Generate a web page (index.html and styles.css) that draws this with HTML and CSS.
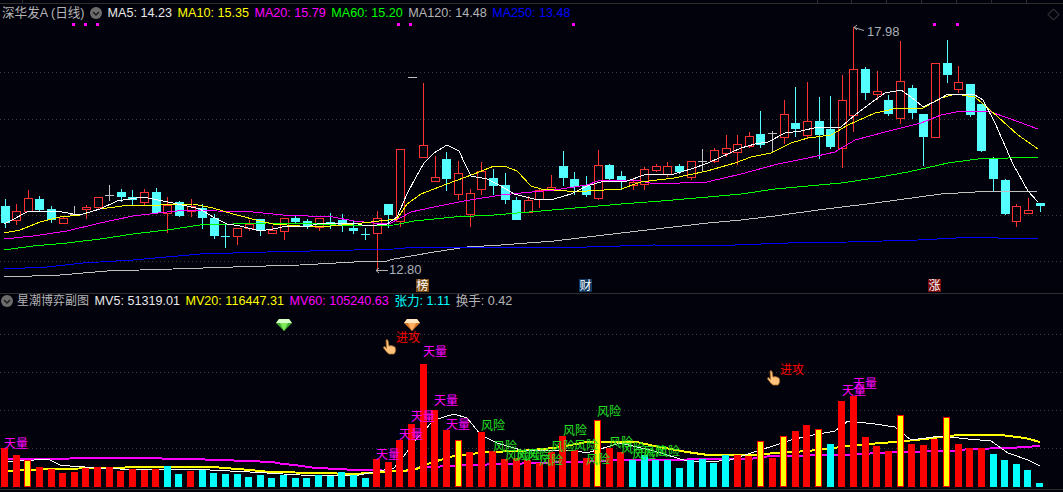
FILE: index.html
```html
<!DOCTYPE html>
<html lang="en">
<head>
    <meta charset="UTF-8">
    <title>深华发A (日线)</title>
    <link rel="stylesheet" href="styles.css">
</head>
<body>

    <svg id="ruler" class="ruler" width="1063" height="4"></svg>

    <div class="legend">
        <span class="title">深华发A (日线)</span>
        <svg class="toggle" width="12" height="12" viewBox="0 0 12 12"><circle cx="6" cy="6" r="6"/><path d="M3 5l3 3 3-3"/></svg>
        <span class="c-white">MA5: 14.23</span>
        <span class="c-yellow">MA10: 15.35</span>
        <span class="c-magenta">MA20: 15.79</span>
        <span class="c-green">MA60: 15.20</span>
        <span class="c-grey">MA120: 14.48</span>
        <span class="c-blue">MA250: 13.48</span>
        <svg class="layout-icon" width="13" height="13" viewBox="0 0 13 13"><path d="M6.5 1L12 6.5 6.5 12 1 6.5z"/></svg>
    </div>
    <svg id="kline" class="chart" width="1063" height="272" viewBox="0 21 1063 272"></svg>

    <div class="legend legend-sub">
        <svg class="toggle" width="12" height="12" viewBox="0 0 12 12"><circle cx="6" cy="6" r="6"/><path d="M3 5l3 3 3-3"/></svg>
        <span class="title">星潮博弈副图</span>
        <span class="c-white">MV5: 51319.01</span>
        <span class="c-yellow">MV20: 116447.31</span>
        <span class="c-magenta">MV60: 105240.63</span>
        <span class="c-cyan">张力: 1.11</span>
        <span class="c-grey">换手: 0.42</span>
    </div>
    <svg id="volume" class="chart" width="1063" height="181" viewBox="0 311 1063 181">
        <defs>
            <symbol id="gem-green" viewBox="0 0 16 12">
                <path fill="#3fae2c" d="M3 0h10l3 4-8 8-8-8z"/>
                <path fill="#d8ffc8" d="M3 0h10l3 4H0z"/>
                <path fill="#7fe85a" d="M4 4h8l-4 8z"/>
            </symbol>
            <symbol id="gem-orange" viewBox="0 0 16 12">
                <path fill="#d9772a" d="M3 0h10l3 4-8 8-8-8z"/>
                <path fill="#ffe6c0" d="M3 0h10l3 4H0z"/>
                <path fill="#ffb062" d="M4 4h8l-4 8z"/>
            </symbol>
            <symbol id="hand" viewBox="0 0 14 16">
                <path fill="#ffc27a" stroke="#9a6426" stroke-width=".8" d="M3 1.200C3.800.2 5 .8 5.100 2L6 7l2-.4 2 .5 2 1c1 2 1 5-1 7H6C4 14 2.300 11 .7 9.200 0 8 1.200 7 2.200 8l1.300 1.300z"/>
            </symbol>
        </defs>
    </svg>

    <script src="script.js"></script>
</body>
</html>
```

FILE: styles.css
```css
html, body {
    margin: 0;
    background: #02020c;
}
body {
    width: 1063px;
    height: 492px;
    overflow: hidden;
    font-family: "Liberation Sans", "Noto Sans CJK SC", sans-serif;
    font-size: 12.6px;
    line-height: 14px;
}
svg {
    display: block;
}
.legend {
    display: flex;
    align-items: center;
    gap: 5.5px;
    height: 17px;
    padding-left: 2px;
    white-space: nowrap;
}
.legend-sub {
    height: 14px;
    padding-bottom: 3px;
    padding-left: 1px;
    border-top: 1px solid #2e2e2e;
}
.legend .title {
    color: #b4b4b4;
}
.legend-sub .title {
    font-size: 12px;
    margin-left: -1.5px;
}
.toggle circle {
    fill: #6c6c6c;
}
.toggle path {
    fill: none;
    stroke: #1c1c1c;
    stroke-width: 1.5;
}
.layout-icon {
    position: absolute;
    left: 1047px;
    top: 8px;
}
.layout-icon path {
    fill: none;
    stroke: #4a4a4a;
}
.c-white { color: #e8e8e8; }
.c-yellow { color: #ffff00; }
.c-magenta { color: #ff00ff; }
.c-green { color: #00ff00; }
.c-grey { color: #b4b4b4; }
.c-blue { color: #0000ff; }
.c-cyan { color: #00ffff; }

.ruler line, .base {
    stroke: #2e2e2e;
}
.chart text {
    font-family: "Noto Sans CJK SC", "Liberation Sans", sans-serif;
    font-size: 12px;
}
.grid {
    stroke: #3c3c3c;
    stroke-dasharray: 1 3;
}
.ma {
    fill: none;
    shape-rendering: crispEdges;
}
.mv {
    fill: none;
    stroke-width: 2;
    shape-rendering: crispEdges;
}
.s-white { stroke: #ffffff; }
.s-yellow { stroke: #ffff00; }
.s-magenta { stroke: #ff00ff; }
.s-green { stroke: #00ff00; }
.s-grey { stroke: #c0c0c0; }
.s-blue { stroke: #0000ff; }

.wick, .doji { shape-rendering: crispEdges; }
.up { stroke: #ff3232; }
.down { stroke: #54ffff; }
.flat { stroke: #c0c0c0; }
.body-up { fill: none; stroke: #ff3232; shape-rendering: crispEdges; }
.body-down { fill: #54ffff; shape-rendering: crispEdges; }
.mark { fill: #ff00ff; }

.bar-r { fill: #ff0000; }
.bar-c { fill: #00ffff; }
.bar-y { fill: #ffff00; stroke: #ff0000; shape-rendering: crispEdges; }

.chart .price {
    fill: #a8b0b8;
    font-family: "Liberation Sans", sans-serif;
    font-size: 13px;
}
.pointer { stroke: #b0b0b0; fill: none; }
.badge-text { fill: #ffffff; text-anchor: middle; }
.tag-star { fill: #ff00ff; }
.tag-risk { fill: #22e022; }
.tag-attack { fill: #ff0000; }
```

FILE: script.js
```js
// candles: [bodyTop, bodyBottom, high, low, kind]  r = hollow red, c = cyan, g = grey doji, d = cyan doji
var candles = [
    [206,223,199,228,'c'],[211,220,204,225,'r'],[198,211,190,212,'r'],[199,210,196,211,'c'],[209,220,206,223,'c'],
    [218,223,216,223,'r'],[214,214,206,216,'g'],[207,209,205,219,'r'],[197,207,197,209,'r'],[195,195,185,201,'g'],
    [192,197,189,202,'c'],[197,200,190,205,'c'],[192,202,189,205,'r'],[192,213,188,214,'c'],[205,213,197,233,'r'],
    [202,216,201,217,'c'],[206,211,199,217,'r'],[208,218,204,229,'c'],[218,236,214,239,'c'],[236,236,224,248,'d'],
    [228,236,228,245,'r'],[224,228,220,231,'r'],[219,231,219,236,'c'],[230,233,226,234,'r'],[218,231,218,240,'r'],
    [218,222,216,224,'c'],[221,227,219,229,'c'],[218,227,218,231,'r'],[222,222,213,229,'d'],[220,226,214,232,'c'],
    [228,231,221,234,'c'],[234,234,228,240,'d'],[218,233,211,270,'r'],[204,215,204,228,'c'],[149,221,149,227,'r'],
    [77,77,77,77,'g'],[145,157,83,157,'r'],[177,181,156,181,'r'],[159,179,152,191,'c'],[173,194,161,200,'r'],
    [193,214,189,227,'r'],[171,189,162,195,'r'],[178,186,169,195,'c'],[185,200,173,204,'c'],[200,220,197,220,'c'],
    [200,212,196,213,'r'],[190,199,188,208,'r'],[187,189,175,191,'r'],[166,178,151,186,'c'],[179,187,172,195,'c'],
    [186,195,176,197,'c'],[165,198,150,200,'r'],[165,179,164,181,'c'],[176,181,171,190,'c'],[182,185,178,190,'r'],
    [169,184,167,190,'r'],[166,170,164,172,'r'],[166,174,162,177,'r'],[166,172,164,174,'c'],[161,177,161,180,'r'],
    [161,161,149,172,'g'],[150,161,148,163,'r'],[148,153,135,157,'r'],[144,152,135,165,'r'],[136,146,132,148,'r'],
    [134,145,111,148,'c'],[133,133,131,152,'g'],[114,137,100,144,'r'],[123,129,87,137,'c'],[121,135,82,138,'r'],
    [121,135,97,159,'c'],[129,147,96,149,'c'],[100,148,75,168,'r'],[69,115,27,132,'r'],[69,93,67,100,'c'],
    [91,94,71,100,'r'],[100,114,95,116,'c'],[81,118,41,124,'r'],[88,113,85,119,'c'],[114,137,114,166,'c'],
    [63,137,63,137,'r'],[63,75,40,83,'c'],[82,89,66,93,'r'],[84,115,84,117,'c'],[104,151,104,152,'c'],
    [158,179,157,191,'c'],[180,214,179,215,'c'],[206,221,204,227,'r'],[210,213,198,214,'r'],[203,206,203,212,'c']
];

var maLines = {
    white: [4,224,10,221,27,212,40,211,57,211,73,214,83,214,100,209,117,201,143,197,163,201,187,206,200,209,213,217,227,224,240,226,260,231,273,229,287,226,310,226,320,223,353,223,367,226,387,224,397,217,407,194,416,177,424,163,434,153,447,145,459,151,465,164,471,176,487,179,501,186,514,194,534,199,554,199,571,194,587,186,604,181,627,181,644,175,674,174,691,169,708,163,721,157,741,148,755,144,768,142,785,133,801,131,818,127,841,127,855,115,868,105,885,93,901,90,915,100,923,107,938,100,948,94,975,95,983,100,995,123,1013,164,1028,191,1038,202],
    yellow: [4,233,20,230,40,222,60,217,80,215,100,209,130,205,160,205,193,204,213,208,233,214,260,221,273,224,300,226,320,227,353,224,397,219,407,204,421,194,447,184,474,174,494,166,504,166,517,171,531,186,541,189,567,191,587,191,621,189,641,182,674,178,707,171,735,163,751,157,771,153,791,143,808,138,831,135,848,125,875,113,898,108,923,108,941,98,955,94,975,97,998,117,1018,135,1038,149],
    magenta: [4,239,33,236,67,231,100,223,133,216,167,212,187,210,217,211,253,212,283,215,333,217,354,221,374,223,391,223,411,212,434,207,464,201,501,195,521,193,554,190,587,185,601,180,637,180,654,184,707,182,741,174,778,164,808,158,835,152,855,140,885,132,921,123,941,115,961,111,988,111,1008,118,1038,129],
    green: [4,250,33,246,67,243,100,239,133,234,167,230,200,225,233,224,267,223,317,224,354,226,394,225,414,221,454,217,494,215,541,211,587,207,621,204,661,201,708,197,741,194,775,189,808,186,841,183,875,178,908,172,948,163,978,159,1038,157],
    grey: [4,277,60,275,107,271,173,269,233,267,300,265,354,262,387,261,394,259,434,252,467,247,501,245,554,241,621,233,708,223,741,220,775,216,818,210,875,203,941,194,975,192,1038,191],
    blue: [4,269,47,267,83,263,133,260,200,254,267,252,354,250,394,249,417,247,487,247,587,247,654,245,708,246,788,243,848,242,918,240,975,237,998,238,1038,238]
};

// volume bars: [top, kind]  r = red, c = cyan, y = yellow
var bars = [
    [448,'r'],[455,'r'],[460,'y'],[467,'r'],[469,'r'],[473,'r'],[472,'r'],[468,'r'],[467,'r'],[467,'r'],
    [471,'r'],[469,'r'],[470,'r'],[469,'r'],[466,'c'],[474,'c'],[471,'r'],[470,'c'],[473,'c'],[474,'c'],
    [474,'c'],[477,'c'],[475,'c'],[478,'c'],[475,'c'],[478,'c'],[478,'c'],[475,'c'],[476,'c'],[472,'c'],
    [475,'c'],[478,'c'],[459,'r'],[462,'r'],[440,'r'],[424,'r'],[364,'r'],[410,'r'],[430,'r'],[440,'y'],
    [452,'r'],[432,'r'],[451,'r'],[459,'r'],[458,'r'],[460,'r'],[463,'r'],[452,'r'],[436,'r'],[450,'r'],
    [458,'r'],[420,'y'],[448,'r'],[452,'r'],[460,'c'],[455,'c'],[460,'c'],[460,'c'],[468,'c'],[460,'c'],
    [459,'c'],[463,'c'],[455,'c'],[455,'r'],[456,'r'],[441,'y'],[458,'r'],[436,'y'],[431,'r'],[425,'r'],
    [429,'y'],[444,'c'],[401,'r'],[396,'r'],[437,'r'],[446,'r'],[451,'r'],[415,'y'],[444,'r'],[445,'r'],
    [439,'r'],[417,'y'],[444,'r'],[448,'r'],[448,'r'],[454,'c'],[460,'c'],[464,'c'],[470,'c'],[483,'c']
];

var mvLines = {
    magenta: [8,459,133,458,190,459,248,461,272,462,283,464,295,465,315,468,340,469,354,470,410,471,417,468,430,467,470,465,540,463,600,461,625,460,750,459,770,456,840,455,900,452,950,451,970,449,1010,448,1040,446],
    yellow: [8,471,50,469,108,468,143,467,213,467,225,468,250,470,270,472,320,473,354,474,414,470,430,463,454,456,487,452,520,451,554,448,587,442,637,442,654,446,687,452,708,455,755,455,775,453,808,451,841,447,868,444,895,442,925,439,958,435,1001,435,1025,438,1040,442]
};
var mvWhite = [8,462,20,461,48,459,52,461,60,465,70,466,100,468,120,469,170,469,210,470,250,472,300,475,354,476,394,468,404,456,417,438,434,420,454,414,467,418,481,435,497,443,521,450,571,450,587,453,620,443,654,451,687,461,708,462,730,460,791,440,808,436,835,431,848,421,875,424,895,427,911,440,941,436,968,439,991,441,1008,453,1028,460,1040,466];

var tags = [
    ['天量','star',[[4,444],[376,455],[399,435],[411,417],[423,352],[434,401],[446,425],[842,391],[853,384]]],
    ['风险','risk',[[481,426],[493,447],[505,456],[516,456],[527,455],[539,461],[551,447],[563,431],[574,446],[586,460],[597,412],[609,443],[621,449],[632,455],[643,452],[656,452]]],
    ['进攻','attack',[[396,338],[780,370]]]
];

var NS = 'http://www.w3.org/2000/svg';

function add(parent, name, attrs, text) {
    var el = document.createElementNS(NS, name);
    for (var k in attrs) el.setAttribute(k, attrs[k]);
    if (text) el.textContent = text;
    parent.appendChild(el);
    return el;
}

function grid(svg, ys) {
    ys.forEach(function (y) {
        add(svg, 'line', { 'class': 'grid', x1: 0, x2: 1063, y1: y + 0.5, y2: y + 0.5 });
    });
}

function poly(svg, cls, pts) {
    add(svg, 'polyline', { 'class': cls, points: pts.join(' ') });
}

// top ruler
var ruler = document.getElementById('ruler');
add(ruler, 'line', { x1: 0, x2: 1063, y1: 3.5, y2: 3.5 });
[22, 817, 851, 886, 921, 956, 991, 1026].forEach(function (x) {
    add(ruler, 'line', { x1: x + 0.5, x2: x + 0.5, y1: 0, y2: 3 });
});

// price chart
var kline = document.getElementById('kline');
grid(kline, [72, 119, 166, 215, 261]);

[73, 85, 97, 398, 410, 573, 934, 957].forEach(function (x) {
    add(kline, 'rect', { 'class': 'mark', x: x - 1, y: 23, width: 3, height: 3 });
});

candles.forEach(function (c, i) {
    var cx = Math.round(4.5 + 11.63 * i), top = c[0], bot = c[1], hi = c[2], lo = c[3], kind = c[4];
    var x = cx + 0.5;
    if (kind === 'r') {
        if (hi < top) add(kline, 'line', { 'class': 'wick up', x1: x, x2: x, y1: hi, y2: top });
        if (lo > bot) add(kline, 'line', { 'class': 'wick up', x1: x, x2: x, y1: bot, y2: lo });
        add(kline, 'rect', { 'class': 'body-up', x: cx - 3.5, y: top + 0.5, width: 8, height: bot - top });
    } else if (kind === 'c') {
        add(kline, 'line', { 'class': 'wick down', x1: x, x2: x, y1: hi, y2: lo });
        add(kline, 'rect', { 'class': 'body-down', x: cx - 4, y: top, width: 9, height: bot - top });
    } else {
        var cls = kind === 'g' ? 'flat' : 'down';
        add(kline, 'line', { 'class': 'wick ' + cls, x1: x, x2: x, y1: hi, y2: lo });
        add(kline, 'line', { 'class': 'doji ' + cls, x1: cx - 4, x2: cx + 5, y1: top + 0.5, y2: top + 0.5 });
    }
});

['grey', 'blue', 'green', 'magenta', 'yellow', 'white'].forEach(function (name) {
    poly(kline, 'ma s-' + name, maLines[name]);
});

// high / low labels
add(kline, 'path', { 'class': 'pointer', d: 'M864 30.500L854 27.500M857 25L854 27.500 857 30' });
add(kline, 'text', { 'class': 'price', x: 867, y: 36 }, '17.98');
add(kline, 'path', { 'class': 'pointer', d: 'M388 270.500H376M379 268L376 270.500 379 273' });
add(kline, 'text', { 'class': 'price', x: 389, y: 274 }, '12.80');

// news badges
[[416, '榜', '#7a4a10'], [579, '财', '#0f3a63'], [928, '涨', '#7a0a0a']].forEach(function (b) {
    add(kline, 'rect', { x: b[0], y: 279, width: 13, height: 13, fill: b[2] });
    add(kline, 'text', { 'class': 'badge-text', x: b[0] + 6.5, y: 290 }, b[1]);
});

// volume chart
var volume = document.getElementById('volume');
grid(volume, [334, 372, 410, 448]);
add(volume, 'line', { 'class': 'base', x1: 0, x2: 1063, y1: 489.5, y2: 489.5 });

poly(volume, 'mv s-magenta', mvLines.magenta);
poly(volume, 'mv s-yellow', mvLines.yellow);
poly(volume, 'ma s-white', mvWhite);

bars.forEach(function (b, i) {
    var x = Math.round(1 + 11.63 * i);
    if (b[1] === 'y') {
        add(volume, 'rect', { 'class': 'bar-y', x: x + 0.5, y: b[0] + 0.5, width: 6, height: 487 - b[0] - 1 });
    } else {
        add(volume, 'rect', { 'class': 'bar-' + b[1], x: x, y: b[0], width: 7, height: 487 - b[0] });
    }
});

tags.forEach(function (t) {
    t[2].forEach(function (p) {
        add(volume, 'text', { 'class': 'tag-' + t[1], x: p[0], y: p[1] + 4 }, t[0]);
    });
});

[['gem-green', 276], ['gem-orange', 404]].forEach(function (g) {
    add(volume, 'use', { href: '#' + g[0], x: g[1], y: 319, width: 16, height: 12 });
});
[383, 767].forEach(function (x, i) {
    add(volume, 'use', { href: '#hand', x: x, y: i ? 370 : 339, width: 14, height: 16 });
});
```
